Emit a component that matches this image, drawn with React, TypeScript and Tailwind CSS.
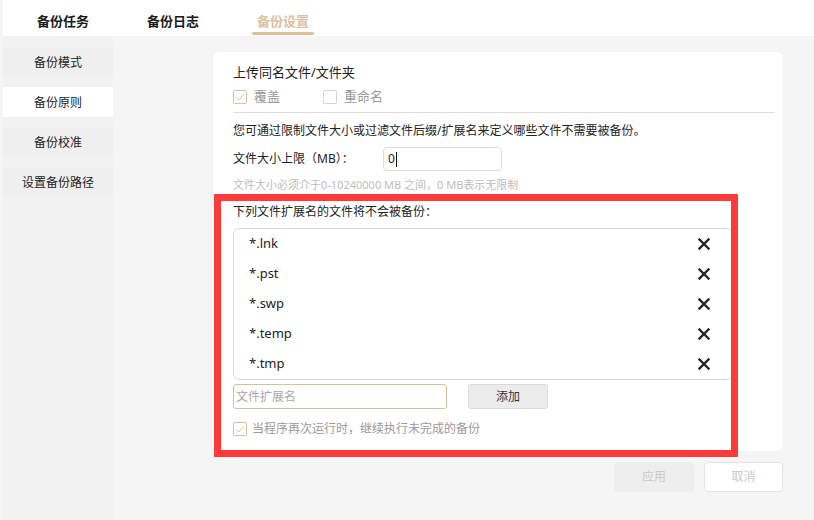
import React from "react";

const tabs = [
  { label: "备份任务", active: false },
  { label: "备份日志", active: false },
  { label: "备份设置", active: true },
];

const sideItems = [
  { label: "备份模式", active: false },
  { label: "备份原则", active: true },
  { label: "备份校准", active: false },
  { label: "设置备份路径", active: false },
];

const extensions = ["*.lnk", "*.pst", "*.swp", "*.temp", "*.tmp"];

function CheckBox({ checked }: { checked: boolean }) {
  return (
    <span
      className={`flex h-[14px] w-[14px] items-center justify-center rounded-[2px] border bg-white ${
        checked ? "border-[#dcc09c]" : "border-[#d4d4d4]"
      }`}
    >
      {checked && (
        <svg width="10" height="8" viewBox="0 0 10 8" fill="none">
          <path d="M1 4.2 L3.8 7 L9 1.2" stroke="#d9bb96" strokeWidth="1" />
        </svg>
      )}
    </span>
  );
}

function CloseIcon() {
  return (
    <svg width="12" height="12" viewBox="0 0 12 12" fill="none">
      <path d="M1.5 1.5 L10.5 10.5 M10.5 1.5 L1.5 10.5" stroke="#262626" strokeWidth="2.4" strokeLinecap="square" />
    </svg>
  );
}

export default function App() {
  return (
    <div className="relative flex h-[520px] w-[814px] flex-col overflow-hidden bg-[#f5f5f5] font-['Noto_Sans','Noto_Sans_CJK_SC',sans-serif] text-[#222]">
      {/* top tabs */}
      <div className="ml-[3px] flex h-[36px] shrink-0 bg-white pl-[5px]">
        {tabs.map((t) => (
          <div key={t.label} className="relative flex w-[110px] justify-center pt-[11px]">
            <span
              className={`text-[13px] font-bold leading-[20px] ${
                t.active ? "text-[#dcc0a0]" : "text-[#1a1a1a]"
              }`}
            >
              {t.label}
            </span>
            {t.active && (
              <span className="absolute bottom-[1px] left-[24px] h-[3px] w-[62px] rounded-full bg-[#dfbf98]" />
            )}
          </div>
        ))}
      </div>

      <div className="flex flex-1">
        {/* sidebar */}
        <div className="ml-[3px] flex w-[110px] flex-col gap-[10px] bg-[#f2f2f2] pt-[11px]">
          {sideItems.map((s) => (
            <div
              key={s.label}
              className={`flex h-[30px] items-center justify-center pt-px text-[12px] ${
                s.active ? "bg-white" : "bg-[#efefef]"
              }`}
            >
              {s.label}
            </div>
          ))}
        </div>

        {/* main */}
        <div className="flex flex-1 flex-col pl-[100px] pt-[16px]">
          <div className="flex h-[399px] w-[570px] flex-col rounded-[6px] bg-white pl-[20px] pr-[8px] pt-[10px]">
            <div className="text-[13px] leading-[20px]">上传同名文件/文件夹</div>
            <div className="mt-[5px] flex h-[20px] items-center text-[13px] text-[#9a9a9a]">
              <CheckBox checked />
              <span className="ml-[7px] w-[69px]">覆盖</span>
              <CheckBox checked={false} />
              <span className="ml-[7px]">重命名</span>
            </div>
            <div className="mt-[5px] h-px bg-[#dedede]" />
            <div className="mt-[8px] text-[12px] leading-[20px]">
              您可通过限制文件大小或过滤文件后缀/扩展名来定义哪些文件不需要被备份。
            </div>
            <div className="mt-[6px] flex items-center">
              <span className="w-[150px] text-[12px]">文件大小上限（MB）：</span>
              <div className="flex h-[24px] w-[119px] items-center rounded-[4px] border border-[#dcdcdc] pl-[4px] text-[12px]">
                <span>0</span>
                <span className="ml-[1px] h-[15px] w-px bg-[#111]" />
              </div>
            </div>
            <div className="mt-[5px] text-[11px] leading-[18px] text-[#bdbdbd]">
              文件大小必须介于0-10240000 MB 之间，0 MB表示无限制
            </div>
            <div className="mt-[9px] text-[12px] leading-[18px]">下列文件扩展名的文件将不会被备份：</div>
            <div className="mt-[7px] flex w-[500px] flex-col rounded-[6px] border border-[#dadada]">
              {extensions.map((e) => (
                <div key={e} className="flex h-[30px] items-center justify-between pl-[15px] pr-[22px] text-[13px]">
                  <span>{e}</span>
                  <CloseIcon />
                </div>
              ))}
            </div>
            <div className="mt-[4px] flex items-center">
              <div className="flex h-[25px] w-[214px] items-center rounded-[3px] border border-[#d8bd98] pl-[2px] text-[12px] text-[#a8a8a8]">
                文件扩展名
              </div>
              <div className="ml-[21px] flex h-[25px] w-[80px] items-center justify-center rounded-[3px] border border-[#dadada] bg-[#ececec] text-[12px] text-[#333]">
                添加
              </div>
            </div>
            <div className="mt-[11px] flex items-center text-[12px] text-[#9a9a9a]">
              <CheckBox checked />
              <span className="ml-[5px]">当程序再次运行时，继续执行未完成的备份</span>
            </div>
          </div>

          <div className="mt-[11px] flex w-[570px] justify-end gap-[10px]">
            <div className="flex h-[30px] w-[80px] items-center justify-center rounded-[4px] bg-[#eeeeee] text-[12px] text-[#cacaca]">
              应用
            </div>
            <div className="flex h-[30px] w-[79px] items-center justify-center rounded-[4px] border border-[#e4e4e4] bg-white text-[12px] text-[#cacaca]">
              取消
            </div>
          </div>
        </div>
      </div>

      {/* annotation box */}
      <div className="pointer-events-none absolute left-[214px] top-[194px] h-[263px] w-[524px] border-[7px] border-[#fe3a3a]" />
    </div>
  );
}
